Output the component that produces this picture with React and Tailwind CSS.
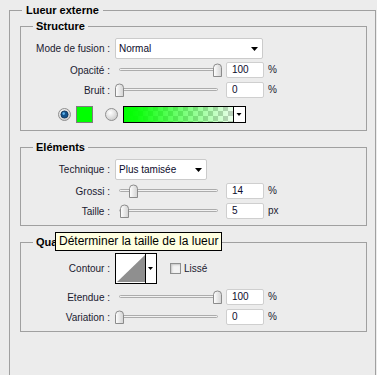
import React from "react";

const Arrow = () => (
  <svg width="7" height="4" viewBox="0 0 7 4">
    <path d="M0 0 H7 L3.5 4 Z" fill="#000" />
  </svg>
);

const Label = ({ children }) => (
  <div className="w-[89px] shrink-0 text-right whitespace-nowrap">{children}</div>
);

const Slider = ({ pos }) => (
  <svg width="107" height="16" viewBox="0 0 107 16" className="shrink-0">
    <defs>
      <linearGradient id="thumbg" x1="0" y1="0" x2="1" y2="0">
        <stop offset="0" stopColor="#ffffff" />
        <stop offset="1" stopColor="#d2d2d2" />
      </linearGradient>
    </defs>
    <rect x="4.5" y="6.5" width="98" height="2" rx="1" fill="#f2f2f2" stroke="#acacac" />
    <path
      d={`M${pos + 0.5} 14.5 V5.5 A4 3.5 0 0 1 ${pos + 8.5} 5.5 V14.5 Z`}
      fill="url(#thumbg)"
      stroke="#8b8b8b"
    />
  </svg>
);

const Field = ({ value, unit }) => (
  <>
    <div className="ml-[4px] w-[38px] h-[16px] shrink-0 bg-white border border-[#cfcfcf] rounded-[2px] pl-[5px] leading-[14px] text-[#0c0c2c]">
      {value}
    </div>
    <div className="ml-[4px] -mt-[2px] text-[#1a1a30]">{unit}</div>
  </>
);

const SliderRow = ({ label, pos, value, unit, mt }) => (
  <div className={`flex items-center h-[16px] ${mt}`}>
    <Label>{label}</Label>
    <div className="ml-[5px] flex items-center">
      <Slider pos={pos} />
      <Field value={value} unit={unit} />
    </div>
  </div>
);

const Select = ({ value, w }) => (
  <div
    className={`ml-[5px] ${w} h-full bg-white border border-[#cbcbcb] rounded-[2px] flex items-center justify-between pl-[3px] pr-[4px] text-[#0c0c2c]`}
  >
    <span>{value}</span>
    <Arrow />
  </div>
);

const Radio = ({ on }) => (
  <svg width="13" height="13" viewBox="0 0 13 13" className="shrink-0">
    <defs>
      <radialGradient id={on ? "rOn" : "rOff"} cx="0.4" cy="0.35" r="0.7">
        <stop offset="0" stopColor="#ffffff" />
        <stop offset="1" stopColor="#c9c9c9" />
      </radialGradient>
    </defs>
    <circle cx="6.5" cy="6.5" r="6" fill={`url(#${on ? "rOn" : "rOff"})`} stroke="#8f8f8f" />
    {on && (
      <>
        <circle cx="6.5" cy="6.5" r="3.6" fill="#12528c" stroke="#0b2f52" strokeWidth="0.8" />
        <circle cx="5.7" cy="5.6" r="1.3" fill="#5fb4ec" />
      </>
    )}
  </svg>
);

const GradientSwatch = () => (
  <svg width="123" height="17" viewBox="0 0 123 17" className="ml-[5px] shrink-0">
    <defs>
      <pattern id="chk" width="10" height="10" patternUnits="userSpaceOnUse">
        <rect width="10" height="10" fill="#ffffff" />
        <rect width="5" height="5" fill="#cccccc" />
        <rect x="5" y="5" width="5" height="5" fill="#cccccc" />
      </pattern>
      <linearGradient id="grn" x1="0" y1="0" x2="1" y2="0">
        <stop offset="0" stopColor="#00ff00" stopOpacity="1" />
        <stop offset="0.12" stopColor="#00ff00" stopOpacity="0.95" />
        <stop offset="1" stopColor="#00ff00" stopOpacity="0.08" />
      </linearGradient>
    </defs>
    <rect x="1" y="1" width="109" height="15" fill="url(#chk)" />
    <rect x="1" y="1" width="109" height="15" fill="url(#grn)" />
    <rect x="111" y="1" width="11" height="15" fill="#ffffff" />
    <line x1="110.5" y1="1" x2="110.5" y2="16" stroke="#000" />
    <path d="M113.5 7 H118.5 L116 10 Z" fill="#000" />
    <rect x="0.5" y="0.5" width="122" height="16" fill="none" stroke="#000" />
  </svg>
);

const ContourBox = () => (
  <svg width="42" height="31" viewBox="0 0 42 31" className="ml-[5px] shrink-0">
    <rect x="0.5" y="0.5" width="41" height="30" fill="#ffffff" stroke="#000" />
    <path d="M2 29 L30 2 V29 Z" fill="#8f8f8f" />
    <line x1="30.5" y1="1" x2="30.5" y2="30" stroke="#000" />
    <path d="M33 14 H38 L35.5 17 Z" fill="#000" />
  </svg>
);

const Group = ({ title, className, children }) => (
  <fieldset className={`ml-[10px] w-[347px] border border-[#a0a0a0] ${className}`}>
    <legend className="ml-[12px] px-[3px] h-[14px] leading-[14px] font-bold text-[11px] text-black">
      {title}
    </legend>
    {children}
  </fieldset>
);

export default function App() {
  return (
    <div className="relative w-[377px] h-[375px] overflow-hidden bg-[#ececec] pl-[9px] pt-[3px] font-['Liberation_Sans',Arial,sans-serif] text-[10px] text-[#1a1a30]">
      <fieldset className="w-[367px] h-[430px] border border-[#a0a0a0]">
        <legend className="ml-[12px] px-[4px] h-[14px] leading-[14px] font-bold text-[11px] text-black">
          Lueur externe
        </legend>

        <Group title="Structure" className="mt-[2px] pb-[7px]">
          <div className="flex items-center h-[21px] mt-[5px]">
            <Label>Mode de fusion :</Label>
            <Select value="Normal" w="w-[148px]" />
          </div>
          <SliderRow label="Opacité :" pos={98} value="100" unit="%" mt="mt-[3px]" />
          <SliderRow label="Bruit :" pos={0} value="0" unit="%" mt="mt-[4px]" />
          <div className="flex items-center h-[17px] mt-[8px] pl-[37px]">
            <Radio on />
            <div className="ml-[5px] w-[17px] h-[17px] bg-[#00ff00] border border-[#7d7d7d] shrink-0" />
            <div className="ml-[12px]">
              <Radio />
            </div>
            <GradientSwatch />
          </div>
        </Group>

        <Group title="Eléments" className="mt-[9px] pb-[6px]">
          <div className="flex items-center h-[21px] mt-[5px]">
            <Label>Technique :</Label>
            <Select value="Plus tamisée" w="w-[92px]" />
          </div>
          <SliderRow label="Grossi :" pos={14} value="14" unit="%" mt="mt-[3px]" />
          <SliderRow label="Taille :" pos={5} value="5" unit="px" mt="mt-[4px]" />
        </Group>

        <Group title="Qualité" className="mt-[9px] pb-[6px]">
          <div className="flex items-center h-[31px] mt-[4px]">
            <Label>Contour :</Label>
            <ContourBox />
            <div className="ml-[13px] w-[11px] h-[11px] border border-[#8e8f8f] bg-[#f3f3f3] shadow-[inset_1px_1px_2px_#c4c4c4] shrink-0" />
            <span className="ml-[3px]">Lissé</span>
          </div>
          <SliderRow label="Etendue :" pos={98} value="100" unit="%" mt="mt-[5px]" />
          <SliderRow label="Variation :" pos={0} value="0" unit="%" mt="mt-[4px]" />
        </Group>
      </fieldset>

      <div className="absolute left-[55px] top-[232px] w-[167px] h-[19px] bg-[#ffffe1] border border-black pl-[3px] leading-[17px] text-[12px] text-black whitespace-nowrap">
        Déterminer la taille de la lueur
      </div>
    </div>
  );
}
